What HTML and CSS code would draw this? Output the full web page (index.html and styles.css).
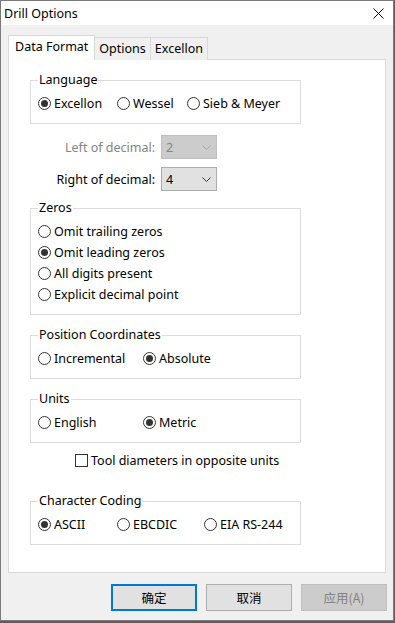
FILE: index.html
```html
<!DOCTYPE html>
<html lang="en">
<head>
    <meta charset="UTF-8">
    <title>Drill Options</title>
    <link rel="stylesheet" href="styles.css">
</head>
<body>
    <div class="dialog">
        <div class="titlebar">
            <span class="title">Drill Options</span>
            <svg class="close" width="11" height="11" viewBox="0 0 11 11">
                <path d="M0.5 0.5 L10.5 10.5 M10.5 0.5 L0.5 10.5" stroke="#000" stroke-width="1" fill="none"/>
            </svg>
        </div>

        <div class="client">
            <div class="tabs">
                <div class="tab active">Data Format</div>
                <div class="tab">Options</div>
                <div class="tab">Excellon</div>
            </div>

            <div class="panel">
                <fieldset class="group">
                    <legend>Language</legend>
                    <div class="row">
                        <label class="radio w79 checked"><span class="mark"></span>Excellon</label>
                        <label class="radio w70"><span class="mark"></span>Wessel</label>
                        <label class="radio"><span class="mark"></span>Sieb &amp; Meyer</label>
                    </div>
                </fieldset>

                <div class="field first">
                    <span class="field-label disabled">Left of decimal:</span>
                    <div class="combo disabled">
                        <span>2</span>
                        <svg width="9" height="5" viewBox="0 0 9 5"><path d="M0.5 0.5 L4.5 4.5 L8.5 0.5" stroke="#a8a8a8" fill="none"/></svg>
                    </div>
                </div>
                <div class="field">
                    <span class="field-label">Right of decimal:</span>
                    <div class="combo">
                        <span>4</span>
                        <svg width="9" height="5" viewBox="0 0 9 5"><path d="M0.5 0.5 L4.5 4.5 L8.5 0.5" stroke="#333" fill="none"/></svg>
                    </div>
                </div>

                <fieldset class="group zeros">
                    <legend>Zeros</legend>
                    <div class="row"><label class="radio"><span class="mark"></span>Omit trailing zeros</label></div>
                    <div class="row"><label class="radio checked"><span class="mark"></span>Omit leading zeros</label></div>
                    <div class="row"><label class="radio"><span class="mark"></span>All digits present</label></div>
                    <div class="row"><label class="radio"><span class="mark"></span>Explicit decimal point</label></div>
                </fieldset>

                <fieldset class="group spaced">
                    <legend>Position Coordinates</legend>
                    <div class="row">
                        <label class="radio w105"><span class="mark"></span>Incremental</label>
                        <label class="radio checked"><span class="mark"></span>Absolute</label>
                    </div>
                </fieldset>

                <fieldset class="group spaced">
                    <legend>Units</legend>
                    <div class="row">
                        <label class="radio w105"><span class="mark"></span>English</label>
                        <label class="radio checked"><span class="mark"></span>Metric</label>
                    </div>
                </fieldset>

                <div class="row check-row">
                    <label class="check"><span class="box"></span>Tool diameters in opposite units</label>
                </div>

                <fieldset class="group coding">
                    <legend>Character Coding</legend>
                    <div class="row">
                        <label class="radio w79 checked"><span class="mark"></span>ASCII</label>
                        <label class="radio w87"><span class="mark"></span>EBCDIC</label>
                        <label class="radio"><span class="mark"></span>EIA RS-244</label>
                    </div>
                </fieldset>
            </div>

            <div class="buttons">
                <button class="btn default">确定</button>
                <button class="btn">取消</button>
                <button class="btn" disabled>应用(A)</button>
            </div>
        </div>
    </div>
</body>
</html>
```

FILE: styles.css
```css
* {
    margin: 0;
    padding: 0;
    box-sizing: border-box;
}

html {
    background: #5e5e5e;
}

body {
    font-family: 'Noto Sans', 'Noto Sans CJK SC', sans-serif;
    font-size: 12.5px;
    color: #000;
    overflow: hidden;
}

.dialog {
    width: 394px;
    height: 621px;
    border: 1px solid #7a7a7a;
    background: #f0f0f0;
    display: flex;
    flex-direction: column;
}

.titlebar {
    height: 24px;
    background: #fff;
    display: flex;
    align-items: center;
    justify-content: space-between;
    padding: 0 9px 0 3px;
}

.close {
    display: block;
}

.client {
    flex: 1;
    padding: 10px 7px 0 7px;
    display: flex;
    flex-direction: column;
}

.tabs {
    display: flex;
    align-items: flex-end;
    height: 25px;
    margin-bottom: -1px;
    position: relative;
    z-index: 1;
}

.tab {
    height: 23px;
    border: 1px solid #d9d9d9;
    border-bottom: none;
    margin-left: -1px;
    padding: 0 4px;
    line-height: 21px;
    background: #f0f0f0;
}

.tab.active {
    height: 25px;
    margin-left: 0;
    padding: 0 6px;
    background: #fff;
    line-height: 22px;
}

.panel {
    height: 514px;
    background: #fff;
    border: 1px solid #d9d9d9;
    padding: 12px 0 0 21px;
}

.group {
    width: 271px;
    border: 1px solid #dcdcdc;
    padding: 0 0 9px 7px;
}

.group legend {
    padding: 0 1px;
    line-height: 16px;
}

.group legend + .row {
    margin-top: 5px;
}

.zeros {
    margin-top: 9px;
}

.spaced {
    margin-top: 12px;
}

.coding {
    margin-top: 22px;
}

.row {
    display: flex;
    align-items: center;
    height: 21px;
}

.radio,
.check {
    display: flex;
    align-items: center;
}

.w70 { width: 70px; }
.w79 { width: 79px; }
.w87 { width: 87px; }
.w105 { width: 105px; }

.mark {
    width: 13px;
    height: 13px;
    border: 1px solid #333;
    border-radius: 50%;
    background: #fff;
    margin-right: 3px;
    display: flex;
    align-items: center;
    justify-content: center;
}

.radio.checked .mark::after {
    content: '';
    width: 7px;
    height: 7px;
    border-radius: 50%;
    background: #333;
}

.check-row {
    margin-top: 7px;
    padding-left: 45px;
}

.box {
    width: 13px;
    height: 13px;
    border: 1px solid #333;
    background: #fff;
    margin-right: 3px;
}

.field {
    display: flex;
    align-items: center;
    margin-top: 8px;
}

.field.first {
    margin-top: 11px;
}

.field-label {
    width: 125px;
    text-align: right;
    margin-right: 6px;
}

.field-label.disabled {
    color: #838383;
}

.combo {
    width: 56px;
    height: 24px;
    border: 1px solid #adadad;
    background: #e1e1e1;
    display: flex;
    align-items: center;
    justify-content: space-between;
    padding: 0 5px 0 4px;
}

.combo.disabled {
    border-color: #bfbfbf;
    background: #cccccc;
    color: #838383;
}

.combo svg {
    display: block;
}

.buttons {
    display: flex;
    justify-content: flex-end;
    gap: 9px;
    margin-top: 11px;
    margin-right: -1px;
}

.btn {
    width: 86px;
    height: 27px;
    border: 1px solid #adadad;
    background: #e1e1e1;
    font-family: 'Noto Sans CJK SC', sans-serif;
    font-size: 12.5px;
    color: #000;
}

.btn.default {
    border: 2px solid #0078d7;
}

.btn:disabled {
    border-color: #bfbfbf;
    background: #cccccc;
    color: #838383;
}
```
